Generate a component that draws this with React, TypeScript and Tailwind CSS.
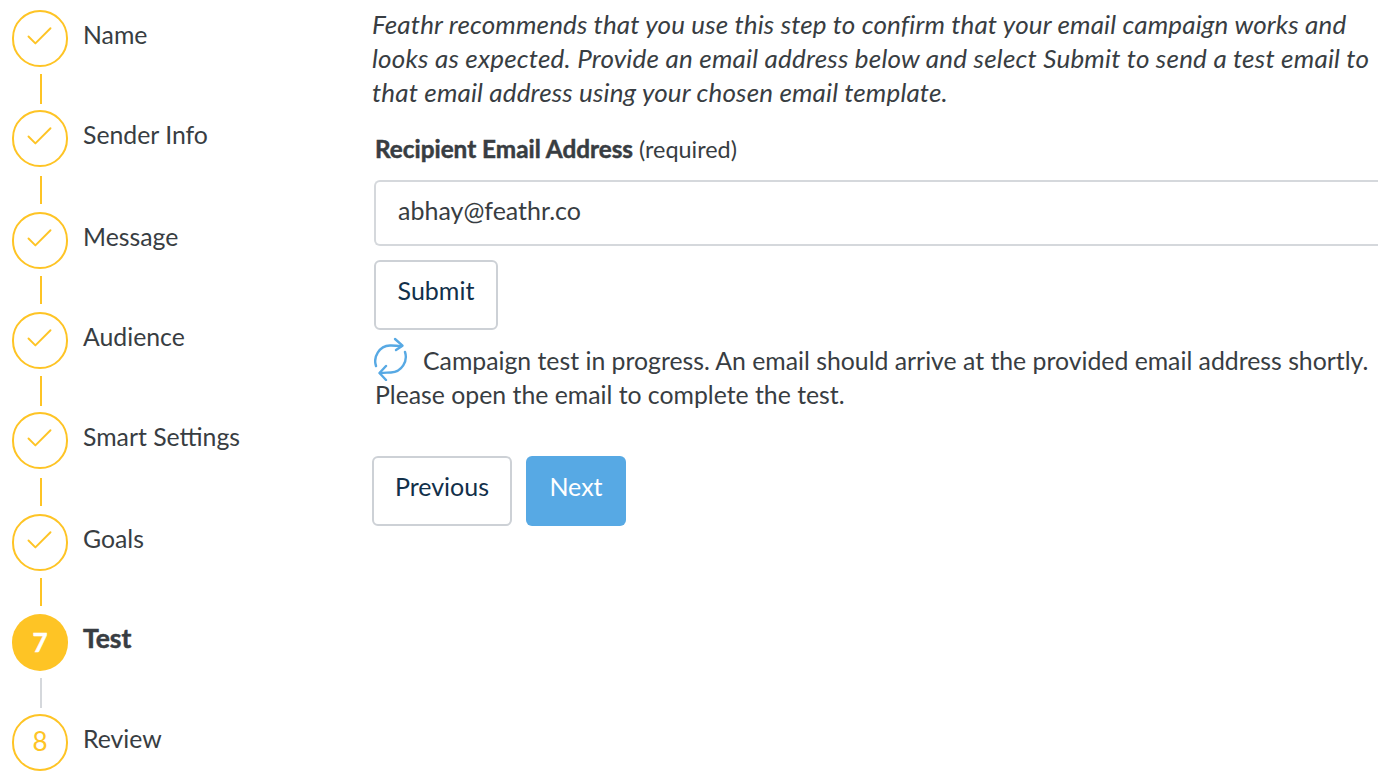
import { Check } from 'lucide-react'

const steps = [
  { name: 'Name', gap: 'h-[43px] pt-[7px]', line: 'h-[30px]' },
  { name: 'Sender Info', gap: 'h-[45px] pt-[9px]', line: 'h-[28px]' },
  { name: 'Message', gap: 'h-[43px] pt-[7px]', line: 'h-[28px]' },
  { name: 'Audience', gap: 'h-[43px] pt-[7px]', line: 'h-[30px]' },
  { name: 'Smart Settings', gap: 'h-[45px] pt-[9px]', line: 'h-[28px]' },
  { name: 'Goals', gap: 'h-[43px] pt-[7px]', line: 'h-[28px]' },
  { name: 'Test', gap: 'h-[43px] pt-[7px]', line: 'h-[30px]' },
  { name: 'Review', gap: '', line: '' },
]
const current = 6

function StepCircle({ index }: { index: number }) {
  if (index < current) {
    return (
      <div className="w-[56px] h-[57px] rounded-full border-2 border-[#fec425] flex items-center justify-center shrink-0">
        <Check size={33} strokeWidth={1.4} className="text-[#fec425] -translate-y-[2px] -translate-x-[1px]" />
      </div>
    )
  }
  if (index === current) {
    return (
      <div className="w-[56px] h-[57px] pb-[2px] rounded-full bg-[#fec425] flex items-center justify-center shrink-0 text-white font-bold text-[26px] [-webkit-text-stroke:0.5px_white]">
        {index + 1}
      </div>
    )
  }
  return (
    <div className="w-[56px] h-[57px] pb-[3px] rounded-full border-2 border-[#fec425] flex items-center justify-center shrink-0 text-[#fec425] text-[26px]">
      {index + 1}
    </div>
  )
}

export default function App() {
  return (
    <div className="w-[1378px] h-[780px] overflow-hidden bg-white flex text-[#383d42] text-[24.8px] leading-[34px] font-['Lato',sans-serif]">
      <div className="w-[372px] shrink-0 pl-[12px] pt-[10px]">
        {steps.map((step, i) => (
          <div key={step.name}>
            <div className="flex items-start gap-[15px]">
              <StepCircle index={i} />
              <span className={`pt-[8px] ${i === current ? 'font-bold text-[26.5px] leading-[32px] [-webkit-text-stroke:0.5px_#383d42]' : ''}`}>{step.name}</span>
            </div>
            {i < steps.length - 1 && (
              <div className={`${step.gap} pl-[28px]`}>
                <div className={`w-[2px] ${step.line} ${i < current ? 'bg-[#fec425]' : 'bg-[#d5d8dc]'}`} />
              </div>
            )}
          </div>
        ))}
      </div>

      <div className="flex-1 min-w-0 pt-[7px]">
        <p className="italic text-[26px] tracking-[0.15px] whitespace-nowrap">
          Feathr recommends that you use this step to confirm that your email campaign works and
          <br />
          <span className="tracking-[0.21px]">looks as expected. Provide an email address below and select Submit to send a test email to</span>
          <br />
          that email address using your chosen email template.
        </p>

        <div className="mt-[23px] pl-[3px] text-[23.4px]">
          <span className="font-bold text-[24.3px] [-webkit-text-stroke:0.5px_#383d42]">Recipient Email Address</span> (required)
        </div>

        <div className="mt-[14px] ml-[2px] h-[66px] pb-[7px] border-2 border-r-0 border-[#d5d8dc] rounded-l-[6px] pl-[22px] flex items-center text-[25px]">
          abhay@feathr.co
        </div>

        <button className="mt-[14px] ml-[2px] block w-[124px] h-[70px] pb-[10px] border-2 border-[#cdd1d6] rounded-[6px] text-[#12304a] text-[25px]">
          Submit
        </button>

        <div className="mt-[14px] ml-[2px]">
          <svg viewBox="0 0 34 44" className="inline-block w-[34px] h-[44px] mr-[15px] -my-[10px] align-middle -translate-y-[5px]" fill="none" stroke="#57a9e4" strokeWidth="2.4" strokeLinecap="round" strokeLinejoin="round">
            <path d="M2 29C-1 20 5 9 16 8.5C20 8.3 23 9 27 9" />
            <path d="M21 2L28.5 8.7L22 13" />
            <path d="M31 15C34 24 28 35 17 35.5C13 35.7 10 35.5 6 36" />
            <path d="M12 29L5.5 36L12 43" />
          </svg>
          Campaign test in progress. An email should arrive at the provided email address shortly.
          <br />
          <span className="ml-[1px]">Please open the email to complete the test.</span>
        </div>

        <div className="mt-[44px] flex gap-[14px]">
          <button className="w-[140px] h-[70px] pb-[10px] border-2 border-[#cdd1d6] rounded-[6px] text-[#12304a] text-[25px]">Previous</button>
          <button className="w-[100px] h-[70px] pb-[10px] rounded-[6px] bg-[#57a9e4] text-white text-[25px]">Next</button>
        </div>
      </div>
    </div>
  )
}
